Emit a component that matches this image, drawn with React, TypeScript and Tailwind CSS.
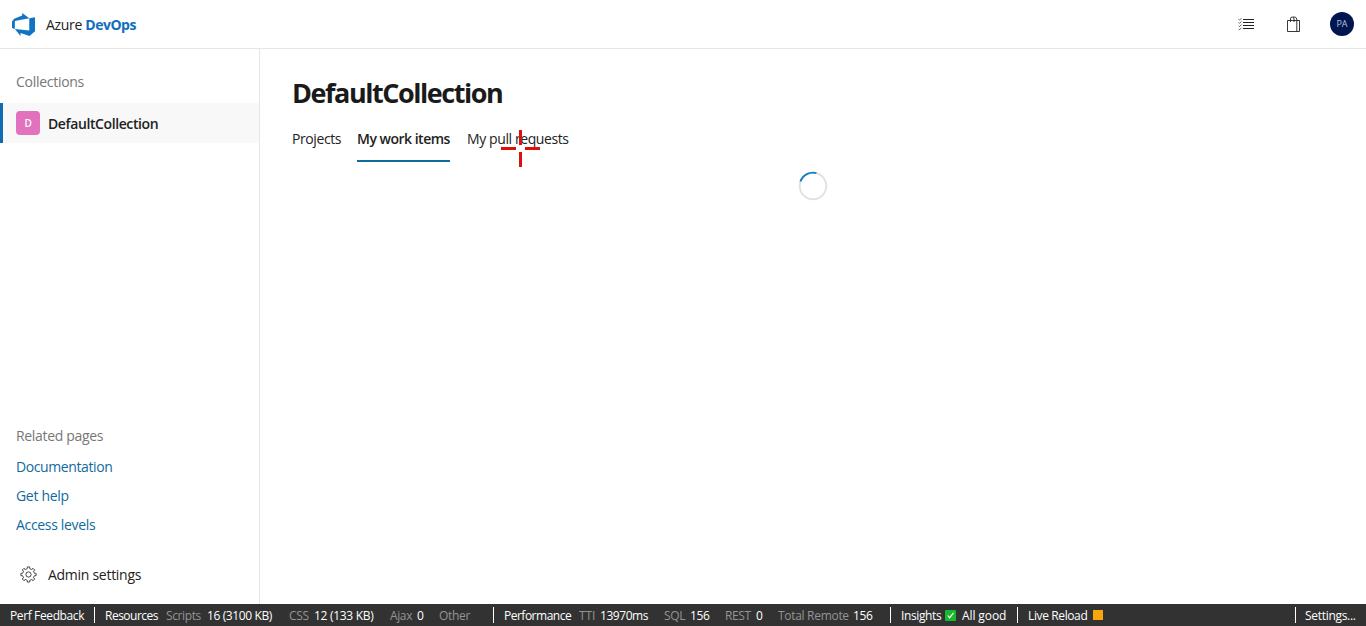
import type { ReactNode } from "react";

function Logo() {
  return (
    <svg viewBox="0 0 24 24" className="h-[23px] w-[23px] shrink-0" fill="#1173c4">
      <path d="M0 8.899l2.247-2.966 8.405-3.416V.045l7.37 5.393L2.966 8.36v8.224L0 15.73zm24-4.45v14.652l-5.753 4.9-9.303-3.057v3.056l-5.978-7.416 15.057 1.798V5.415z" />
    </svg>
  );
}

function ListIcon() {
  return (
    <svg viewBox="0 0 16 14" className="h-[14px] w-4" fill="none" stroke="#222">
      <path d="M5 2.5h11M5 5.5h11M5 8.5h11M5 11.5h11" strokeWidth="1.15" />
      <path d="M.5 2.2l1 1 2-2M.5 5.4l1 1 2-2M.5 8.6l1 1 2-2M.5 11.8l1 1 2-2" strokeWidth=".7" />
    </svg>
  );
}

function BagIcon() {
  return (
    <svg viewBox="0 0 14 17" className="h-[17px] w-[14px]" fill="none" stroke="#222">
      <path d="M.5 4.5h12v11H.5zM9.8 4.5v11M3.5 6V3q0-2 1.7-2T7 3v3M6 1q3.5-.5 3.8 2v1.5" strokeWidth=".9" />
    </svg>
  );
}

const teeth = [0, 45, 90, 135, 180, 225, 270, 315];

function GearIcon() {
  return (
    <svg viewBox="-8.5 -8.5 17 17" className="h-[17px] w-[17px]" fill="none" stroke="#333" strokeWidth=".9">
      <circle r="2.6" />
      {teeth.map((a) => (
        <path key={a} transform={`rotate(${a})`} d="M-2.25 -5.4L-1.3 -5.8L-1.1 -7.6H1.1L1.3 -5.8L2.25 -5.4" />
      ))}
    </svg>
  );
}

function Label({ w, dim, children }: { w: string; dim?: boolean; children: ReactNode }) {
  return <span className={`shrink-0 pt-[2px] ${w} ${dim ? "text-[#949494]" : "text-white"}`}>{children}</span>;
}

function Divider() {
  return <span className="mr-[10px] h-4 w-px shrink-0 bg-white" />;
}

export default function App() {
  return (
    <div className="flex h-[626px] w-[1366px] flex-col overflow-hidden bg-white font-['Open_Sans','Noto_Sans',sans-serif] text-sm tracking-[-0.32px] whitespace-nowrap text-[#222]">
      <header className="flex h-[49px] shrink-0 items-center border-b border-[#e6e6e6] pl-3">
        <Logo />
        <div className="ml-[11px] pt-[2px]">
          Azure <span className="font-bold tracking-[-0.5px] text-[#106ebe]">DevOps</span>
        </div>
        <div className="ml-auto flex items-center pr-3">
          <ListIcon />
          <span className="ml-[33px]"><BagIcon /></span>
          <span className="ml-[29px] flex h-6 w-6 items-center justify-center rounded-full bg-[#00164f] text-[9px] tracking-normal text-[#b9c4e0]">PA</span>
        </div>
      </header>

      <div className="flex min-h-0 flex-1">
        <aside className="flex w-[260px] shrink-0 flex-col border-r border-[#e6e6e6]">
          <div className="mt-[23px] h-5 pl-4 leading-5 tracking-[-0.28px] text-[#777]">Collections</div>
          <div className="mt-[11px] flex h-10 items-center border-l-[3px] border-[#0f6cb4] bg-[#f8f8f8] pl-[13px]">
            <span className="flex h-6 w-6 items-center justify-center rounded-[4px] bg-[#e272bd] text-[10px] font-semibold text-white">D</span>
            <span className="ml-2 pt-[2px] font-semibold tracking-[-0.4px]">DefaultCollection</span>
          </div>
          <div className="mt-auto pl-4">
            <div className="h-[31px] leading-[22px] text-[#777]">Related pages</div>
            <nav className="flex flex-col text-[#106a9e]">
              <a className="h-[29px] leading-[22px] tracking-[-0.4px]">Documentation</a>
              <a className="h-[29px] leading-[22px]">Get help</a>
              <a className="h-[29px] leading-[22px]">Access levels</a>
            </nav>
          </div>
          <div className="mt-[11px] mb-[10px] flex h-10 items-center pl-5">
            <GearIcon />
            <span className="ml-[11px] pt-[2px] tracking-[-0.28px]">Admin settings</span>
          </div>
        </aside>

        <main className="flex flex-1 flex-col pl-8">
          <h1 className="mt-[28px] h-8 text-[27px] leading-8 font-bold tracking-[-1.45px] text-[#1a1a1a]">DefaultCollection</h1>
          <div className="mt-[5px] flex h-12 leading-[50px]">
            <span className="w-[65px] tracking-[-0.4px]">Projects</span>
            <span className="w-[93px] border-b-2 border-[#106a9e] font-semibold tracking-[-0.5px]">My work items</span>
            <span className="relative ml-[17px] tracking-[-0.4px]">
              My pull requests
              <svg viewBox="0 0 40 38" className="absolute top-4 left-[34px] h-[38px] w-10" stroke="#dd1010" strokeWidth="3">
                <path d="M19.5 0v15M19.5 22v15M0 18.5h15M24 18.5h15" />
              </svg>
            </span>
          </div>
          <div className="mt-[9px] ml-[506px] h-[30px] w-[30px]">
            <svg viewBox="0 0 30 30" fill="none" strokeWidth="1.9">
              <circle cx="15" cy="15" r="13.3" stroke="#e1e1e1" />
              <path d="M2.5 10.5A13.3 13.3 0 0 1 18.4 2.1" stroke="#107ec0" />
            </svg>
          </div>
        </main>
      </div>

      <footer className="flex h-[22px] shrink-0 items-center bg-[#323232] pl-[10px] text-xs tracking-[-0.38px]">
        <Label w="w-[84px]">Perf Feedback</Label>
        <Divider />
        <Label w="w-[61px] tracking-[-0.5px]">Resources</Label>
        <Label w="w-[41px]" dim>Scripts</Label>
        <Label w="w-[82px]">16 (3100 KB)</Label>
        <Label w="w-[25px]" dim>CSS</Label>
        <Label w="w-[76px] tracking-[-0.3px]">12 (133 KB)</Label>
        <Label w="w-[27px]" dim>Ajax</Label>
        <Label w="w-[22px]">0</Label>
        <Label w="w-[54px] tracking-[-0.3px]" dim>Other</Label>
        <Divider />
        <Label w="w-[75px] tracking-[-0.5px]">Performance</Label>
        <Label w="w-[21px] tracking-[-0.1px]" dim>TTI</Label>
        <Label w="w-[64px] tracking-[-0.45px]">13970ms</Label>
        <Label w="w-[26px]" dim>SQL</Label>
        <Label w="w-[35px]">156</Label>
        <Label w="w-[31px]" dim>REST</Label>
        <Label w="w-[22px]">0</Label>
        <Label w="w-[75px] tracking-[-0.3px]" dim>Total Remote</Label>
        <Label w="w-[37px]">156</Label>
        <Divider />
        <Label w="w-[44px]">Insights</Label>
        <svg viewBox="0 0 12 12" className="mt-px mr-[6px] h-[11px] w-[11px] shrink-0">
          <rect width="12" height="12" rx="1" fill="#16b82e" />
          <path d="M3 6l2 2.5L9.3 3.2" fill="none" stroke="white" strokeWidth="1.3" />
        </svg>
        <Label w="w-[55px] tracking-[-0.1px]">All good</Label>
        <Divider />
        <Label w="w-[65px]">Live Reload</Label>
        <span className="h-[10px] w-[10px] shrink-0 bg-[#fba50c]" />
        <span className="ml-auto h-4 w-px bg-white" />
        <span className="ml-[9px] w-[61px] pt-[2px] tracking-[-0.3px] text-white">Settings...</span>
      </footer>
    </div>
  );
}
